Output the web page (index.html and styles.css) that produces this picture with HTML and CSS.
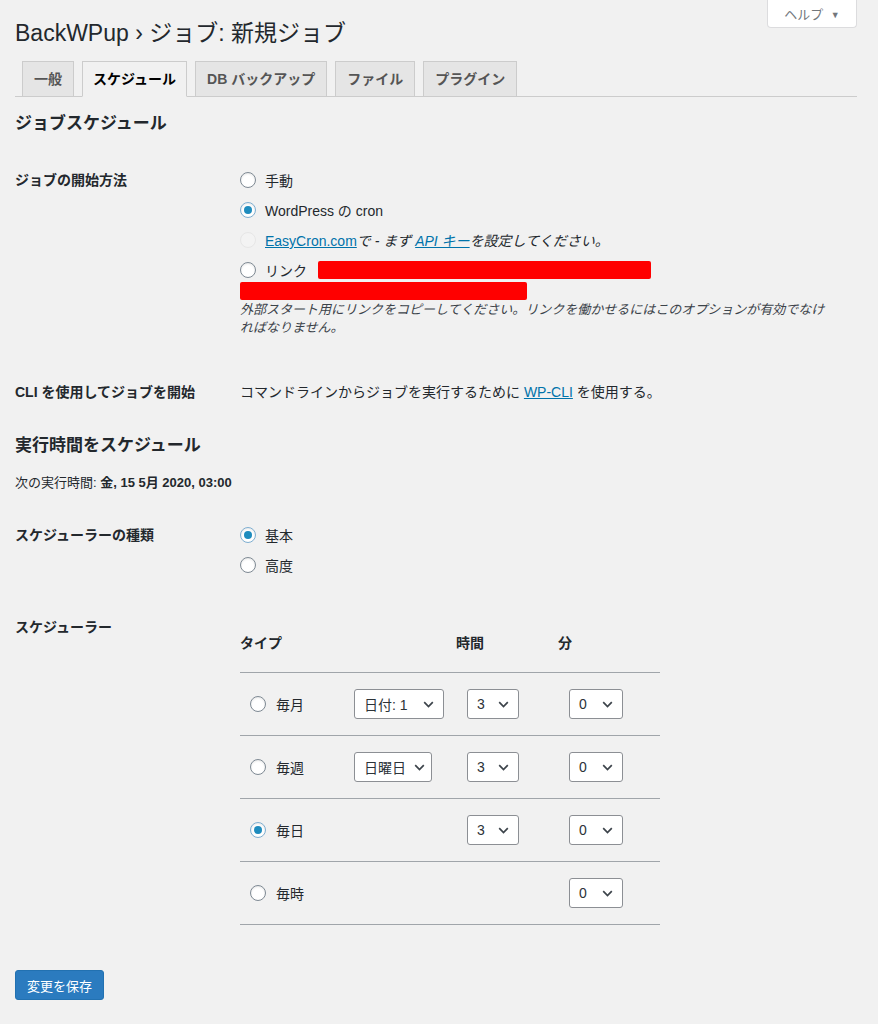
FILE: index.html
```html
<!DOCTYPE html>
<html lang="ja">
<head>
    <meta charset="UTF-8">
    <meta name="viewport" content="width=device-width, initial-scale=1.0">
    <title>BackWPup › ジョブ: 新規ジョブ</title>
    <link rel="stylesheet" href="styles.css">
</head>
<body>
<div class="wrap">
    <div class="page-head">
        <h1>BackWPup › ジョブ: 新規ジョブ</h1>
        <button class="help-tab">ヘルプ <span class="caret">▼</span></button>
    </div>

    <nav class="nav-tabs">
        <a class="tab">一般</a>
        <a class="tab active">スケジュール</a>
        <a class="tab">DB バックアップ</a>
        <a class="tab">ファイル</a>
        <a class="tab">プラグイン</a>
    </nav>

    <h2 class="title first">ジョブスケジュール</h2>

    <div class="form-row">
        <div class="row-label">ジョブの開始方法</div>
        <div class="row-field">
            <label class="option"><input type="radio" class="radio" name="start"><span>手動</span></label>
            <label class="option"><input type="radio" class="radio" name="start" checked><span>WordPress の cron</span></label>
            <label class="option"><input type="radio" class="radio" name="start" disabled><span><a class="link">EasyCron.com</a><em>で - まず <a class="link">API キー</a>を設定してください。</em></span></label>
            <label class="option"><input type="radio" class="radio" name="start"><span>リンク</span><span class="redact redact-url"></span></label>
            <span class="redact redact-line"></span>
            <p class="description">外部スタート用にリンクをコピーしてください。リンクを働かせるにはこのオプションが有効でなければなりません。</p>
        </div>
    </div>

    <div class="form-row">
        <div class="row-label">CLI を使用してジョブを開始</div>
        <div class="row-field">
            <p class="plain">コマンドラインからジョブを実行するために <a class="link">WP-CLI</a> を使用する。</p>
        </div>
    </div>

    <h2 class="title">実行時間をスケジュール</h2>
    <p class="next-run">次の実行時間: <strong>金, 15 5月 2020, 03:00</strong></p>

    <div class="form-row type-row">
        <div class="row-label">スケジューラーの種類</div>
        <div class="row-field">
            <label class="option"><input type="radio" class="radio" name="type" checked><span>基本</span></label>
            <label class="option"><input type="radio" class="radio" name="type"><span>高度</span></label>
        </div>
    </div>

    <div class="form-row scheduler-row">
        <div class="row-label">スケジューラー</div>
        <div class="row-field">
            <div class="sched-table">
                <div class="sched-head">
                    <span>タイプ</span>
                    <span></span>
                    <span>時間</span>
                    <span>分</span>
                </div>
                <div class="sched-row">
                    <label class="cell-type"><input type="radio" class="radio" name="cron">毎月</label>
                    <div class="cell-day"><div class="select w-day">日付: 1<svg width="11" height="7" viewBox="0 0 11 7"><path d="M1.2 1.2l4.3 4.3 4.3-4.3" fill="none" stroke="#3c434a" stroke-width="1.7"/></svg></div></div>
                    <div class="cell-num"><div class="select w-hour">3<svg width="11" height="7" viewBox="0 0 11 7"><path d="M1.2 1.2l4.3 4.3 4.3-4.3" fill="none" stroke="#3c434a" stroke-width="1.7"/></svg></div></div>
                    <div class="cell-num"><div class="select w-min">0<svg width="11" height="7" viewBox="0 0 11 7"><path d="M1.2 1.2l4.3 4.3 4.3-4.3" fill="none" stroke="#3c434a" stroke-width="1.7"/></svg></div></div>
                </div>
                <div class="sched-row">
                    <label class="cell-type"><input type="radio" class="radio" name="cron">毎週</label>
                    <div class="cell-day"><div class="select w-week">日曜日<svg width="11" height="7" viewBox="0 0 11 7"><path d="M1.2 1.2l4.3 4.3 4.3-4.3" fill="none" stroke="#3c434a" stroke-width="1.7"/></svg></div></div>
                    <div class="cell-num"><div class="select w-hour">3<svg width="11" height="7" viewBox="0 0 11 7"><path d="M1.2 1.2l4.3 4.3 4.3-4.3" fill="none" stroke="#3c434a" stroke-width="1.7"/></svg></div></div>
                    <div class="cell-num"><div class="select w-min">0<svg width="11" height="7" viewBox="0 0 11 7"><path d="M1.2 1.2l4.3 4.3 4.3-4.3" fill="none" stroke="#3c434a" stroke-width="1.7"/></svg></div></div>
                </div>
                <div class="sched-row">
                    <label class="cell-type"><input type="radio" class="radio" name="cron" checked>毎日</label>
                    <div class="cell-day"></div>
                    <div class="cell-num"><div class="select w-hour">3<svg width="11" height="7" viewBox="0 0 11 7"><path d="M1.2 1.2l4.3 4.3 4.3-4.3" fill="none" stroke="#3c434a" stroke-width="1.7"/></svg></div></div>
                    <div class="cell-num"><div class="select w-min">0<svg width="11" height="7" viewBox="0 0 11 7"><path d="M1.2 1.2l4.3 4.3 4.3-4.3" fill="none" stroke="#3c434a" stroke-width="1.7"/></svg></div></div>
                </div>
                <div class="sched-row">
                    <label class="cell-type"><input type="radio" class="radio" name="cron">毎時</label>
                    <div class="cell-day"></div>
                    <div class="cell-num"></div>
                    <div class="cell-num"><div class="select w-min">0<svg width="11" height="7" viewBox="0 0 11 7"><path d="M1.2 1.2l4.3 4.3 4.3-4.3" fill="none" stroke="#3c434a" stroke-width="1.7"/></svg></div></div>
                </div>
            </div>
        </div>
    </div>

    <p class="submit"><button class="button-primary">変更を保存</button></p>
</div>
</body>
</html>
```

FILE: styles.css
```css
body {
    margin: 0;
    background: #f1f1f1;
    color: #23282d;
    font-family: "Liberation Sans", "Noto Sans CJK JP", sans-serif;
    font-size: 14px;
}
.wrap {
    margin: 0 21px 0 15px;
}
.page-head {
    display: flex;
    justify-content: space-between;
    align-items: flex-start;
}
h1 {
    margin: 19px 0 0;
    font-size: 23px;
    line-height: 29px;
    font-weight: 400;
    color: #23282d;
}
.help-tab {
    margin-top: -1px;
    width: 90px;
    height: 29px;
    background: #fff;
    border: 1px solid #dcdcde;
    border-top: none;
    border-radius: 0 0 4px 4px;
    color: #72777c;
    font-family: inherit;
    font-size: 13px;
    padding: 0;
}
.help-tab .caret {
    font-size: 9px;
    margin-left: 4px;
    vertical-align: 1px;
}
.nav-tabs {
    display: flex;
    gap: 8px;
    padding-left: 7px;
    margin-top: 13px;
    border-bottom: 1px solid #ccc;
}
.tab {
    border: 1px solid #ccc;
    margin-bottom: -1px;
    background: #e5e5e5;
    padding: 5px 11px;
    line-height: 24px;
    font-size: 14px;
    font-weight: 700;
    color: #555;
}
.tab.active {
    background: #f1f1f1;
    border-bottom-color: #f1f1f1;
    color: #000;
    padding: 5px 10px;
}
.title {
    font-size: 17px;
    line-height: 24px;
    font-weight: 700;
    margin: 7px 0 0;
}
.title.first {
    margin: 15px 0 9px;
}
.form-row {
    display: grid;
    grid-template-columns: 225px 1fr;
    padding: 20px 0;
}
.row-label {
    font-weight: 700;
    line-height: 30px;
}
.option {
    display: flex;
    align-items: center;
    height: 30px;
    white-space: nowrap;
}
.plain {
    margin: 0;
    line-height: 30px;
}
.radio {
    appearance: none;
    -webkit-appearance: none;
    width: 16px;
    height: 16px;
    margin: 0 9px 0 0;
    border: 1px solid #7e8993;
    border-radius: 50%;
    background: #fff;
    box-shadow: inset 0 1px 2px rgba(0, 0, 0, .1);
    display: inline-flex;
    align-items: center;
    justify-content: center;
    flex: none;
}
.radio:checked {
    border-color: #7eaed0;
}
.radio:checked::before {
    content: "";
    width: 8px;
    height: 8px;
    border-radius: 50%;
    background: #1e8cbe;
}
.radio:disabled {
    border-color: #e6e6e6;
    background: #f3f3f3;
    box-shadow: none;
}
.link {
    color: #0073aa;
    text-decoration: underline;
}
em {
    font-style: italic;
}
.redact {
    display: block;
    background: #ff0000;
    border-radius: 2px;
    height: 18px;
}
.redact-url {
    display: inline-block;
    width: 333px;
    margin-left: 11px;
}
.redact-line {
    width: 287px;
    margin-top: -3px;
}
.description {
    margin: 1px 0 0;
    max-width: 590px;
    font-size: 13px;
    line-height: 18px;
    font-style: italic;
    color: #3c434a;
}
.next-run {
    margin: 15px 0 0;
    font-size: 13px;
    line-height: 20px;
}
.type-row {
    margin-top: 7px;
}
.scheduler-row {
    padding-top: 12px;
}
.sched-table {
    width: 420px;
    border-bottom: 1px solid #a0a5aa;
}
.sched-head, .sched-row {
    display: grid;
    grid-template-columns: 106px 110px 102px 102px;
    align-items: center;
}
.sched-head {
    height: 60px;
    font-weight: 700;
}
.sched-row {
    height: 62px;
    border-top: 1px solid #a0a5aa;
}
.cell-type {
    display: flex;
    align-items: center;
    padding-left: 10px;
}
.cell-type .radio {
    margin-right: 10px;
}
.cell-day {
    padding-left: 8px;
}
.cell-num {
    padding-left: 11px;
}
.select {
    display: flex;
    align-items: center;
    justify-content: space-between;
    box-sizing: border-box;
    height: 30px;
    padding: 0 9px 0 9px;
    background: #fff;
    border: 1px solid #8c8f94;
    border-radius: 3px;
    font-size: 14px;
    color: #2c3338;
}
.w-day { width: 90px; }
.w-week { width: 78px; padding-right: 6px; }
.w-hour { width: 52px; }
.w-min { width: 54px; }
.submit {
    margin: 25px 0 0;
}
.button-primary {
    background: #2b7bbf;
    border: 1px solid #2271b1;
    border-radius: 3px;
    color: #fff;
    font-family: inherit;
    font-size: 13px;
    height: 30px;
    width: 89px;
    padding: 0;
}
```
